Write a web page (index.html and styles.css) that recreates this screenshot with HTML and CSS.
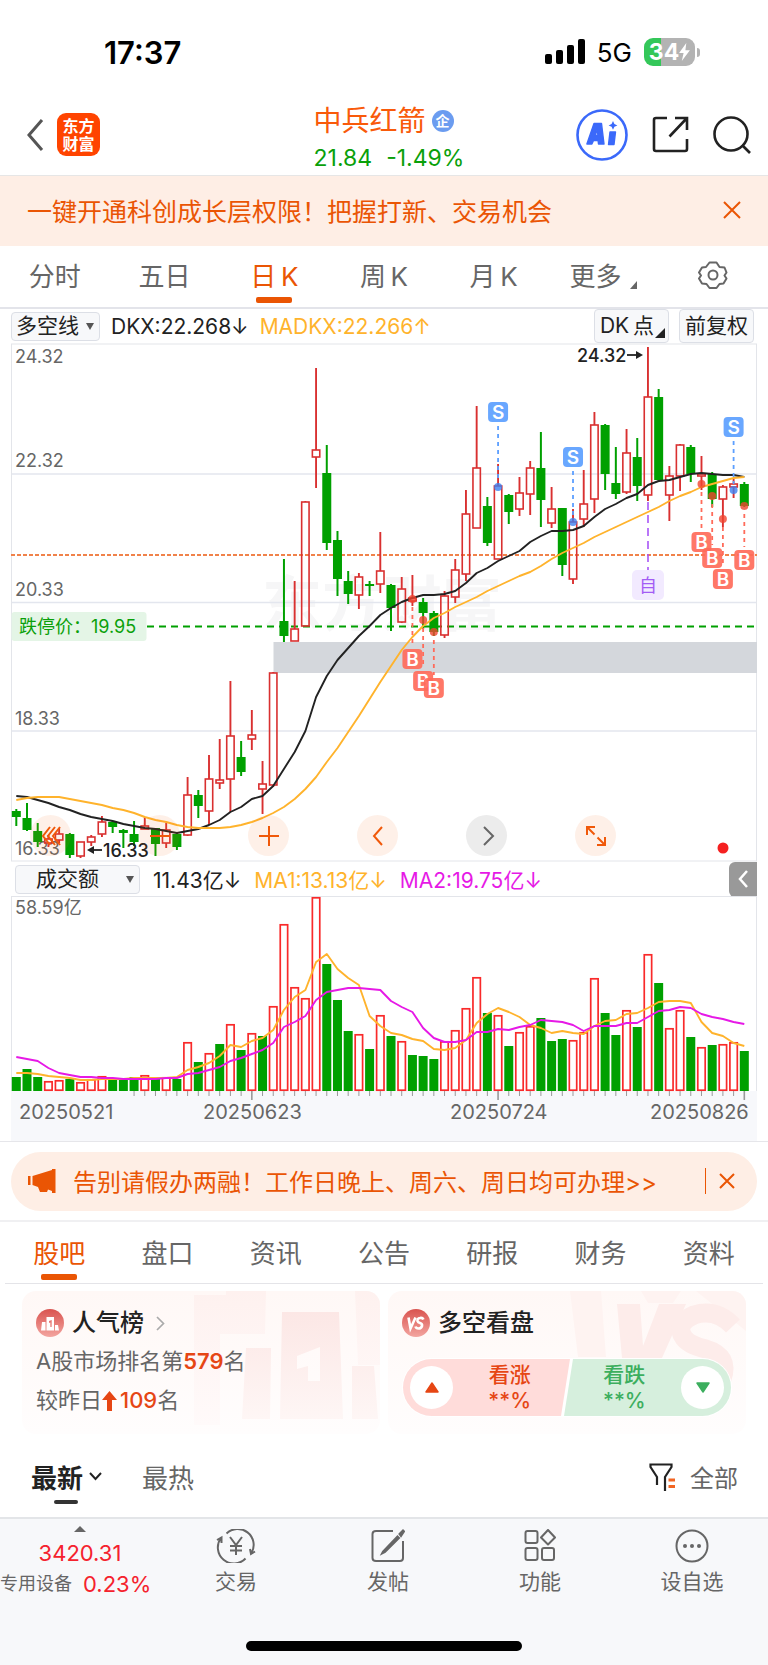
FILE: index.html
```html
<!DOCTYPE html>
<html lang="zh-CN">
<head>
<meta charset="utf-8">
<meta name="viewport" content="width=device-width, initial-scale=1">
<title>中兵红箭</title>
<link rel="stylesheet" href="styles.css">
</head>
<body>
<div class="status-bar">
  <time class="clock">17:37</time>
  <div class="status-right">
    <svg class="signal" viewBox="0 0 40 26" aria-hidden="true"><rect x="0" y="15" width="7" height="10" rx="2"/><rect x="11" y="11" width="7" height="14" rx="2"/><rect x="22" y="6" width="7" height="19" rx="2"/><rect x="33" y="0" width="7" height="25" rx="2"/></svg>
    <span class="network">5G</span>
    <span class="battery"><span class="battery-body">34<svg viewBox="0 0 12 20" aria-hidden="true"><path d="M8 0 0 11h5l-2 9 9-12H7z"/></svg></span><span class="battery-tip"></span></span>
  </div>
</div>

<header class="nav">
  <div class="nav-left">
    <button class="icon-button" aria-label="返回"><svg width="17" height="32" viewBox="0 0 17 32"><path d="M15 1 2 16l13 15" fill="none" stroke="#555" stroke-width="3"/></svg></button>
    <a class="logo" href="#"><span>东方</span><span>财富</span></a>
  </div>
  <div class="nav-title">
    <h1>中兵红箭<span class="badge">企</span></h1>
    <p><span>21.84</span><span>-1.49%</span></p>
  </div>
  <div class="nav-right">
    <button class="icon-button" aria-label="AI"><svg width="52" height="52" viewBox="0 0 52 52"><circle cx="26" cy="26" r="24.5" fill="#fff" stroke="#3b69fa" stroke-width="2.6"/><path fill="#3b69fa" stroke="#3b69fa" stroke-width="1.4" stroke-linejoin="round" fill-rule="evenodd" d="M18 14.500h7.500l2.500 20.500h-5.500l-.4-3.500h-4.600l-1.600 3.500h-5zM21.300 20l-2 6.500h2.600zM34 23h5.500l-1.500 12.500h-5.500z"/><path fill="#3b69fa" d="m37 12 1.400 3 3 1.400-3 1.400-1.400 3-1.400-3-3-1.400 3-1.400z"/></svg></button>
    <button class="icon-button" aria-label="分享"><svg width="37" height="37" viewBox="0 0 37 37" fill="none" stroke="#222" stroke-width="2.600"><path d="M15 2H4Q2 2 2 4v29q0 2 2 2h29q2 0 2-2V23M23 2h12v12M35 2 17.500 20.500"/></svg></button>
    <button class="icon-button" aria-label="搜索"><svg width="38" height="38" viewBox="0 0 38 38" fill="none" stroke="#222" stroke-width="2.600"><circle cx="18" cy="18" r="16.500"/><path d="m29 29 8 8"/></svg></button>
  </div>
</header>

<section class="banner">
  <a href="#">一键开通科创成长层权限！把握打新、交易机会</a>
  <button class="icon-button" aria-label="关闭"><svg width="18" height="18" viewBox="0 0 18 18"><path d="m1 1 16 16M17 1 1 17" stroke="#ea5504" stroke-width="2"/></svg></button>
</section>

<nav class="tabs period-tabs">
  <button class="tab">分时</button>
  <button class="tab">五日</button>
  <button class="tab active">日&thinsp;K</button>
  <button class="tab">周&thinsp;K</button>
  <button class="tab">月&thinsp;K</button>
  <button class="tab more">更多<span class="corner"></span></button>
  <button class="tab" aria-label="设置"><svg width="30" height="28" viewBox="0 0 30 28" fill="none" stroke="#666" stroke-width="2"><path d="M11.500 1.500h7l3 4.500 5 .5 2 5-2 3 2 3-3 5-4 .5-3 4h-7l-3-4-4.500-.5-3-5 2-3-2-3 3-5 4-.5z" stroke-linejoin="round"/><circle cx="15" cy="14" r="4.500"/></svg></button>
</nav>

<section class="info-row">
  <label class="picker"><select aria-label="主图指标"><option>多空线</option></select></label>
  <span class="ink">DKX:22.268↓</span>
  <span class="gold">MADKX:22.266↑</span>
  <div class="info-actions">
    <button class="chip dk">DK&thinsp;点<span class="corner"></span></button>
    <button class="chip">前复权</button>
  </div>
</section>

<section class="chart-box">
  <svg id="price-chart" class="chart" viewBox="0 343 768 519" role="img" aria-label="日K线"></svg>
  <div class="chart-tools">
    <button aria-label="最左"><svg viewBox="0 0 20 20"><path d="m9 1-7 9 7 9M14 1l-7 9 7 9M19 1l-7 9 7 9"/></svg></button>
    <button aria-label="缩小"><svg viewBox="0 0 20 20"><path d="M0 10h20"/></svg></button>
    <button aria-label="放大"><svg viewBox="0 0 20 20"><path d="M0 10h20M10 0v20"/></svg></button>
    <button aria-label="左移"><svg viewBox="0 0 20 20"><path d="m14 1-8 9 8 9"/></svg></button>
    <button class="muted" aria-label="右移"><svg viewBox="0 0 20 20"><path d="m7 1 9 9-9 9"/></svg></button>
    <button aria-label="全屏"><svg viewBox="0 0 20 20"><path d="M1 9V1h8M1 1l7.500 7.500M19 11v8h-8M19 19l-7.500-7.500"/></svg></button>
  </div>
</section>

<section class="info-row volume-row">
  <label class="picker wide"><select aria-label="副图指标"><option>成交额</option></select></label>
  <span class="ink">11.43亿↓</span>
  <span class="gold">MA1:13.13亿↓</span>
  <span class="magenta">MA2:19.75亿↓</span>
  <button class="collapse" aria-label="收起"><svg width="10" height="18" viewBox="0 0 10 18"><path d="M9 1 2 9l7 8" fill="none" stroke="#fff" stroke-width="2.500"/></svg></button>
</section>
<svg id="volume-chart" class="chart" viewBox="0 896 768 245" role="img" aria-label="成交额"></svg>

<section class="notice-wrap">
  <div class="notice">
    <svg width="28" height="24" viewBox="0 0 28 24" fill="#ea5504" aria-hidden="true"><path d="M0 7h2.500v9H0zM4.500 7 24 1V0h3.500v24H24v-2l-4-1.500-1 2.500h-7l-2-5-5.500-2z"/></svg>
    <a href="#">告别请假办两融！工作日晚上、周六、周日均可办理&gt;&gt;</a>
    <button class="icon-button" aria-label="关闭"><svg width="16" height="16" viewBox="0 0 16 16"><path d="m1 1 14 14M15 1 1 15" stroke="#ea5504" stroke-width="2"/></svg></button>
  </div>
</section>

<nav class="tabs section-tabs">
  <button class="tab active">股吧</button>
  <button class="tab">盘口</button>
  <button class="tab">资讯</button>
  <button class="tab">公告</button>
  <button class="tab">研报</button>
  <button class="tab">财务</button>
  <button class="tab">资料</button>
</nav>

<section class="cards">
  <article class="card">
    <svg class="card-art" width="190" height="142" viewBox="0 0 190 142" aria-hidden="true"><defs><linearGradient id="fade" x1="0" y1="0" x2="0" y2="1"><stop offset="0" stop-color="#fce7e5"/><stop offset="1" stop-color="#fef6f5"/></linearGradient><linearGradient id="haze" x1="0" y1="0" x2="0" y2="1"><stop offset="0" stop-color="#fef1ef"/><stop offset="1" stop-color="#fffafa"/></linearGradient></defs><path fill="url(#haze)" d="M4 4h32V0h40l-1 43H30v91H4zM165 0h25v74h-22z"/><path fill="url(#fade)" fill-rule="evenodd" d="M56 57h25l-1 71H52zM92 21h57l4 107H90zM130 56l-23 9v13l11-3v15h12zM162 75h22l4 53h-26z"/></svg>
    <h2><svg width="28" height="28" viewBox="0 0 28 28" aria-hidden="true"><defs><linearGradient id="coin" x1="0" y1="0" x2="0" y2="1"><stop offset="0" stop-color="#d9534f"/><stop offset="1" stop-color="#f3a5a0"/></linearGradient></defs><circle cx="14" cy="14" r="14" fill="url(#coin)"/><path fill="#fff" fill-rule="evenodd" d="M6 13h3.500v8.500H5zM10.500 8h7.500v13.500h-7.500zM13 12v2l1.300-.4V18h1.400v-7zM19 16h3l1 5.500h-4z"/></svg>人气榜<svg width="9" height="15" viewBox="0 0 9 15" class="more-arrow" aria-hidden="true"><path d="m1 1 6.500 6.500L1 14" fill="none" stroke="#aaa" stroke-width="1.700"/></svg></h2>
    <p class="rank">A股市场排名第<b>579</b>名</p>
    <p>较昨日<svg width="15" height="20" viewBox="0 0 15 20" aria-label="上升"><path d="M7.500 0 15 9h-5v11H5V9H0z" fill="#e64614"/></svg><em>109</em>名</p>
  </article>
  <article class="card">
    <svg class="card-art" width="190" height="142" viewBox="0 0 190 142" aria-hidden="true"><path fill="#fef3f1" d="M14 0h31l5 66H22zM85 0h40l-8 12H92zM140 0h50v40z"/><path fill="#fdecea" d="M61 13h23l3 42 16-42h27L106 67H66z"/><path d="M177 35Q160 17 138 24q-20 9-10 23 5 7 22 11 24 7 16 30" fill="none" stroke="#fdecea" stroke-width="19"/></svg>
    <h2><svg width="28" height="28" viewBox="0 0 28 28" aria-hidden="true"><circle cx="14" cy="14" r="14" fill="url(#coin)"/><path d="m6.500 8.500 2 11 5-11M21.500 10.500q-1-2-3.500-1.500-3 .5-2.500 3 .5 1.500 2.500 2 2.500.8 2 3-.8 2.500-3.500 2.500-2.500 0-3-2" fill="none" stroke="#fff" stroke-width="2.600"/></svg>多空看盘</h2>
    <div class="vote">
      <button class="vote-up"><span class="disc"><svg width="14" height="11" viewBox="0 0 14 11"><path d="M7 1 13 10H1z" fill="#e64614" stroke="#e64614" stroke-width="1.500" stroke-linejoin="round"/></svg></span><span class="vote-text">看涨<br>**%</span></button>
      <button class="vote-down"><span class="vote-text">看跌<br>**%</span><span class="disc"><svg width="14" height="11" viewBox="0 0 14 11"><path d="M7 10 1 1h12z" fill="#3cae5e" stroke="#3cae5e" stroke-width="1.500" stroke-linejoin="round"/></svg></span></button>
    </div>
  </article>
</section>

<section class="feed-bar">
  <button class="feed-tab active">最新<svg width="13" height="9" viewBox="0 0 13 9" aria-hidden="true"><path d="m1 1 5.500 6L12 1" fill="none" stroke="#222" stroke-width="2"/></svg></button>
  <button class="feed-tab">最热</button>
  <button class="filter"><svg width="26" height="28" viewBox="0 0 26 28" aria-hidden="true"><path d="M8 22V14L1.500 4V1.500h21V4L16 14v14" fill="none" stroke="#222" stroke-width="2.200"/><path d="M19.500 17H26M19.500 23.500H26" stroke="#f26522" stroke-width="3"/></svg>全部</button>
</section>

<footer class="dock">
  <div class="dock-items">
    <button class="quote"><span class="up-mark"></span><span class="quote-index">3420.31</span><span class="quote-row"><span>专用设备</span><strong>0.23%</strong></span></button>
    <button class="dock-item"><svg width="40" height="34" viewBox="0 0 40 34"><path d="M10.500 4.500A16 16 0 0 1 35.500 24M29.500 29.500A16 16 0 0 1 5 9M1 11l4.500-2.500V14M39 22.500 35 25l-1-5M14 8l6 8 6-8M20 16v10M14 17h12M14 21.500h12"/></svg>交易</button>
    <button class="dock-item"><svg width="34" height="34" viewBox="0 0 34 34"><path d="M22 2H5Q1.500 2 1.500 5v24q0 3 3.500 3h24q3 0 3-3V12"/><path d="M28.500 5 32 1.500l1 1L30 7zM26.500 7.500 12 22.500l-1 2 3-1.500L28 9z" fill="#666"/></svg>发帖</button>
    <button class="dock-item"><svg width="32" height="34" viewBox="0 0 32 34"><rect x="1.500" y="2" width="12" height="12" rx="2"/><rect x="1.500" y="19" width="12" height="12" rx="2"/><rect x="18" y="19" width="12" height="12" rx="2"/><path d="m24 1 7 7.500-7 7-7-7z" stroke-linejoin="round"/></svg>功能</button>
    <button class="dock-item"><svg width="34" height="34" viewBox="0 0 34 34"><circle cx="17" cy="17" r="15.500"/><g fill="#666" stroke="none"><circle cx="10" cy="17" r="2"/><circle cx="17" cy="17" r="2"/><circle cx="24" cy="17" r="2"/></g></svg>设自选</button>
  </div>
  <div class="home-indicator"></div>
</footer>
<script src="chart.js"></script>
</body>
</html>
```
FILE: styles.css
```css
* { box-sizing: border-box; }

body {
  margin: 0;
  background: #fff;
  color: #222;
  font-family: Inter, "Noto Sans CJK SC", sans-serif;
}

button {
  margin: 0;
  padding: 0;
  border: 0;
  background: none;
  color: inherit;
  font: inherit;
}

a { color: inherit; text-decoration: none; }
h1, h2, p { margin: 0; }
svg { display: block; flex: none; }
.icon-button { display: flex; }

/* Status bar */
.status-bar {
  display: flex;
  justify-content: space-between;
  align-items: center;
  height: 88px;
  padding: 16px 68px 0 104px;
  color: #000;
}
.clock { font-size: 31px; font-weight: 600; }
.status-right { display: flex; align-items: center; }
.signal { width: 40px; height: 26px; }
.network { margin: 0 12px; font-size: 26px; }
.battery { display: flex; align-items: center; gap: 2px; }
.battery-body {
  display: flex;
  align-items: center;
  justify-content: center;
  width: 51px;
  height: 28px;
  border-radius: 9px;
  background: linear-gradient(90deg, #34c759 34%, #b3b3b3 34%);
  color: #fff;
  font-size: 23px;
  font-weight: 700;
}
.battery-body svg { width: 11px; height: 18px; fill: #fff; }
.battery-tip { width: 3px; height: 9px; border-radius: 0 4px 4px 0; background: #b3b3b3; }

/* Navigation */
.nav {
  display: grid;
  grid-template-columns: 1fr auto 1fr;
  align-items: center;
  height: 88px;
  padding: 0 17px 0 27px;
  border-bottom: 1px solid #e6e6e6;
}
.nav-left { display: flex; align-items: center; gap: 13px; padding-top: 6px; }
.logo {
  display: flex;
  flex-direction: column;
  align-items: center;
  justify-content: center;
  width: 43px;
  height: 43px;
  border-radius: 9px;
  background: #ff4400;
  color: #fff;
  font-size: 16px;
  font-weight: 700;
  line-height: 18px;
}
.nav-title { padding-top: 12px; text-align: center; }
.nav-title h1 {
  display: flex;
  align-items: center;
  gap: 6px;
  color: #f95a0a;
  font-size: 28px;
  font-weight: 400;
  line-height: 40px;
}
.badge {
  width: 22px;
  height: 22px;
  border-radius: 50%;
  background: #6b9cf0;
  color: #fff;
  font-size: 14px;
  font-weight: 700;
  line-height: 22px;
}
.nav-title p {
  display: flex;
  justify-content: center;
  gap: 14px;
  color: #0aa00a;
  font-size: 23px;
  line-height: 34px;
}
.nav-right { display: flex; align-items: center; justify-content: flex-end; gap: 24px; padding-top: 6px; }

/* Top banner */
.banner {
  display: flex;
  align-items: center;
  justify-content: space-between;
  height: 70px;
  padding: 0 27px 2px;
  background: #feeee5;
  color: #ea5504;
  font-size: 25px;
}

/* Tabs */
.tabs { display: grid; grid-template-columns: repeat(7, 1fr); }
.tab {
  position: relative;
  display: flex;
  align-items: center;
  justify-content: center;
  height: 61px;
  padding-bottom: 4px;
  color: #666;
  font-size: 26px;
}
.tab.active { color: #ea5504; }
.tab.active::after {
  content: "";
  position: absolute;
  bottom: 4px;
  left: 50%;
  width: 36px;
  height: 6px;
  margin-left: -18px;
  border-radius: 2px;
  background: #ea5504;
}
.period-tabs { border-bottom: 2px solid #e3e4ea; }
.corner {
  align-self: flex-end;
  border-left: 7px solid transparent;
  border-bottom: 8px solid currentColor;
}
.more .corner { margin: 0 0 14px 9px; }

/* Indicator rows */
.info-row {
  display: flex;
  align-items: center;
  gap: 11px;
  height: 34px;
  padding: 0 14px 0 11px;
  font-size: 21px;
  white-space: nowrap;
}
.picker { position: relative; display: flex; }
.picker::after {
  content: "";
  position: absolute;
  top: 11px;
  right: 6px;
  border: 4px solid transparent;
  border-top: 7px solid #555;
  border-bottom: 0;
}
.picker select {
  appearance: none;
  width: 89px;
  height: 29px;
  padding: 0 0 2px 4px;
  border: 1px solid #dcdfe6;
  border-radius: 4px;
  background: #f7f8fa;
  color: #222;
  font: inherit;
  line-height: 26px;
}
.picker.wide select { width: 125px; padding-left: 20px; }
.gold { color: #ffb32c; }
.magenta { color: #e619e6; }
.info-actions { display: flex; gap: 10px; margin-left: auto; }
.chip {
  display: flex;
  align-items: center;
  height: 34px;
  padding: 0 5px 4px;
  border: 1px solid #dcdfe6;
  border-radius: 4px;
  background: #f7f8fa;
}
.dk { padding-right: 3px; }
.dk .corner { margin-left: 1px; border-left-width: 10px; border-bottom-width: 10px; }
.volume-row { gap: 13px; padding: 0 11px 0 15px; }
.collapse {
  display: flex;
  align-items: center;
  justify-content: center;
  width: 28px;
  height: 35px;
  margin-left: auto;
  border-radius: 6px 0 0 6px;
  background: #999;
}

/* Charts */
.chart { width: 100%; height: auto; }
.chart text { font-family: Inter, "Noto Sans CJK SC", sans-serif; }
.chart-box { position: relative; }
.chart-tools {
  position: absolute;
  bottom: 6px;
  left: 30px;
  display: flex;
  gap: 68px;
}
.chart-tools button {
  display: flex;
  align-items: center;
  justify-content: center;
  width: 41px;
  height: 41px;
  border-radius: 50%;
  background: rgba(245, 110, 30, .1);
}
.chart-tools .muted { background: #ececec; }
.chart-tools svg { width: 20px; height: 20px; fill: none; stroke: #f0590a; stroke-width: 2; }
.chart-tools .muted svg { stroke: #666; }

/* Notice pill */
.notice-wrap { padding: 10px 11px 9px; border-top: 1px solid #e6e6ea; border-bottom: 2px solid #f0f0f2; }
.notice {
  display: flex;
  align-items: center;
  height: 59px;
  padding: 0 22px 2px 17px;
  border-radius: 30px;
  background: #feeee5;
  color: #ea5504;
  font-size: 24px;
}
.notice a { margin: 0 auto 0 17px; }
.notice .icon-button { padding: 5px 0 5px 13px; border-left: 1px solid #ea5504; }

.section-tabs { margin: 0 5px; border-bottom: 1px solid #e4e4e8; }
.section-tabs .tab { padding-bottom: 2px; }
.section-tabs .tab.active::after { bottom: 3px; }

/* Cards */
.cards { display: grid; grid-template-columns: 1fr 1fr; gap: 8px; padding: 7px 22px 0; }
.card {
  position: relative;
  height: 143px;
  padding: 16px 14px;
  overflow: hidden;
  border-radius: 14px;
  background: linear-gradient(#fff8f6, #fffdfd);
}
.card-art { position: absolute; top: 0; right: 0; }
.card > h2, .card > p, .vote { position: relative; }
.card h2 {
  display: flex;
  align-items: center;
  gap: 8px;
  font-size: 24px;
  font-weight: 500;
  line-height: 32px;
}
.more-arrow { margin-left: 4px; }
.card p {
  display: flex;
  align-items: center;
  color: #666;
  font-size: 22px;
  line-height: 39px;
}
.card .rank { margin-top: 3px; }
.card p svg { margin-right: 3px; }
.card b, .card em { color: #e64614; font-style: normal; }
.card b { font-weight: 600; }
.card em { font-weight: 500; }

.vote {
  display: flex;
  height: 59px;
  margin-top: 19px;
  border: 1px solid #fff;
  border-radius: 30px;
  overflow: hidden;
  background: #fff;
}
.vote button {
  display: flex;
  align-items: center;
  justify-content: space-between;
  flex: 1;
  padding: 0 7px;
  font-size: 21px;
  line-height: 26px;
}
.vote-up {
  margin-right: -4px;
  background: #ffdcda;
  color: #e64614;
  clip-path: polygon(0 0, 100% 0, calc(100% - 9px) 100%, 0 100%);
}
.vote-down {
  margin-left: -2px;
  background: #d6efdd;
  color: #3cae5e;
  clip-path: polygon(9px 0, 100% 0, 100% 100%, 0 100%);
}
.vote-text { margin: 0 32px; font-weight: 500; }
.disc {
  display: flex;
  align-items: center;
  justify-content: center;
  width: 43px;
  height: 43px;
  border-radius: 50%;
  background: #fff;
}

/* Feed filters */
.feed-bar {
  display: flex;
  align-items: center;
  gap: 40px;
  height: 83px;
  padding: 2px 30px 0 31px;
  color: #666;
  font-size: 26px;
}
.feed-tab { position: relative; display: flex; align-items: center; gap: 6px; }
.feed-tab.active { color: #222; font-weight: 700; }
.feed-tab.active::after {
  content: "";
  position: absolute;
  bottom: -9px;
  left: 23px;
  width: 24px;
  height: 4px;
  border-radius: 2px;
  background: #333;
}
.filter { display: flex; align-items: center; gap: 15px; margin-left: auto; font-size: 24px; }

/* Bottom dock */
.dock {
  padding-bottom: 14px;
  border-top: 2px solid #e3e5e8;
  background: #f7f8fa;
  color: #666;
}
.dock-items { display: grid; grid-template-columns: 160px repeat(4, 1fr); height: 122px; }
.quote { display: flex; flex-direction: column; align-items: center; color: #f5222d; }
.up-mark {
  margin: 7px 0 5px;
  border: 6px solid transparent;
  border-top: 0;
  border-bottom: 6px solid #666;
}
.quote-index { font-size: 22px; line-height: 32px; }
.quote-row { display: flex; align-items: center; align-self: flex-start; gap: 11px; line-height: 30px; }
.quote-row span { color: #666; font-size: 18px; }
.quote-row strong { font-size: 22px; font-weight: 400; }
.dock-item {
  display: flex;
  flex-direction: column;
  align-items: center;
  gap: 4px;
  padding-top: 10px;
  font-size: 21px;
  line-height: 30px;
}
.dock-item svg { fill: none; stroke: #666; stroke-width: 2; }
.home-indicator {
  width: 36%;
  height: 10px;
  margin: 0 auto;
  border-radius: 5px;
  background: #000;
}
```
FILE: chart.js
```js
const LEFT = 16.3;
const STEP = 10.706;
const BODY = 9;
const RED = '#d93030';
const GREEN = '#00a000';
const xAt = (i) => LEFT + i * STEP;

// Colour, high, body top, body bottom, low
const candles = [
  ['g', 809, 811, 817, 826], ['g', 803, 818, 830, 831], ['g', 823, 831, 842, 847], ['r', 835, 839, 843, 847],
  ['r', 828, 834, 840, 843], ['g', 833, 834, 855, 858], ['r', 842, 842, 856, 858], ['r', 835, 837, 842, 846],
  ['r', 816, 822, 834, 837], ['g', 821, 822, 827, 833], ['g', 829, 830, 833, 848], ['g', 821, 834, 842, 846],
  ['r', 817, 826, 829, 829], ['g', 828, 828, 844, 856], ['r', 823, 830, 843, 848], ['g', 833, 834, 847, 850],
  ['r', 777, 795, 835, 836], ['g', 790, 795, 806, 818], ['r', 755, 779, 811, 825], ['r', 739, 780, 783, 789],
  ['r', 681, 736, 779, 812], ['g', 741, 757, 772, 776], ['r', 710, 735, 739, 750], ['r', 761, 784, 789, 814],
  ['r', 672, 673, 785, 787], ['g', 559, 621, 636, 642], ['r', 581, 629, 641, 641], ['r', 501, 502, 626, 626],
  ['r', 368, 450, 457, 488], ['g', 445, 473, 543, 550], ['g', 531, 540, 579, 596], ['g', 571, 581, 594, 604],
  ['r', 573, 577, 595, 609], ['g', 581, 584, 586, 596], ['r', 532, 571, 584, 593], ['g', 584, 585, 608, 631],
  ['r', 577, 589, 622, 623], ['r', 575, 598, 601, 606], ['g', 598, 602, 613, 629], ['g', 611, 613, 632, 636],
  ['r', 591, 596, 635, 638], ['r', 559, 570, 597, 603], ['r', 490, 514, 574, 581], ['r', 406, 468, 528, 528],
  ['g', 497, 506, 543, 546], ['r', 464, 486, 559, 559], ['g', 494, 495, 512, 524], ['r', 477, 493, 509, 516],
  ['r', 461, 468, 494, 515], ['g', 432, 468, 500, 527], ['r', 487, 509, 523, 528], ['g', 508, 508, 565, 576],
  ['r', 509, 522, 579, 584], ['r', 470, 504, 519, 527], ['r', 412, 425, 499, 513], ['g', 424, 425, 474, 490],
  ['g', 447, 483, 494, 499], ['r', 429, 453, 492, 494], ['g', 438, 457, 486, 501], ['r', 347, 397, 495, 501],
  ['g', 389, 397, 480, 482], ['r', 466, 476, 495, 521], ['r', 444, 445, 476, 491], ['g', 445, 447, 474, 482],
  ['r', 456, 474, 476, 490], ['g', 472, 474, 499, 507], ['r', 485, 487, 499, 527], ['r', 479, 484, 487, 498],
  ['g', 482, 484, 506, 507]
];

const dkx = [796, 797, 800, 803, 807, 810, 814, 817, 819, 821, 824, 826, 828, 829, 831, 833, 831, 829, 825, 820, 812, 807, 799, 796, 786, 769, 752, 731, 697, 676, 660, 648, 636, 626, 615, 608, 602, 598, 595, 595, 594, 591, 583, 573, 568, 561, 556, 551, 542, 536, 531, 531, 530, 526, 517, 509, 504, 498, 494, 485, 481, 480, 477, 474, 473, 474, 475, 475, 477];
const madkx = [800, 798, 797, 797, 797, 799, 801, 803, 805, 808, 810, 813, 817, 820, 822, 825, 827, 828, 828, 828, 827, 825, 822, 818, 813, 807, 799, 789, 777, 762, 748, 732, 716, 699, 682, 666, 650, 637, 626, 618, 613, 607, 602, 597, 591, 586, 581, 576, 572, 566, 559, 553, 548, 543, 537, 532, 527, 522, 517, 512, 507, 501, 496, 492, 487, 484, 481, 478, 477];

const volumeColors = 'gggrrgrrrgggrgrgrgrgrgrgrrrrrgggrgrgrggg' + 'rrrrgrgrrgggrrrggrgrgrrgrgrrg';
const volumes = [1077, 1069, 1077, 1081, 1080, 1079, 1082, 1079, 1076, 1079, 1079, 1077, 1075, 1079, 1077, 1079, 1042, 1062, 1053, 1044, 1024, 1050, 1033, 1036, 1006, 924, 987, 998, 897, 964, 1000, 1031, 1034, 1049, 1015, 1036, 1041, 1055, 1056, 1059, 1041, 1030, 1008, 977, 1013, 1015, 1046, 1032, 1026, 1018, 1041, 1039, 1040, 1032, 978, 1013, 1035, 1010, 1027, 954, 983, 1028, 1010, 1037, 1047, 1045, 1044, 1042, 1051];
const ma1 = [1073, 1073, 1074, 1076, 1077, 1078, 1080, 1080, 1079, 1079, 1079, 1078, 1078, 1078, 1078, 1077, 1070, 1067, 1063, 1056, 1045, 1047, 1041, 1038, 1030, 1010, 997, 990, 962, 954, 969, 978, 985, 1016, 1026, 1033, 1035, 1039, 1041, 1049, 1050, 1048, 1040, 1023, 1014, 1008, 1012, 1017, 1025, 1028, 1033, 1031, 1033, 1034, 1026, 1021, 1020, 1014, 1013, 1008, 1002, 1001, 1001, 1003, 1022, 1033, 1036, 1043, 1046];
const ma2 = [1057, 1059, 1061, 1068, 1073, 1075, 1077, 1077, 1078, 1078, 1079, 1079, 1079, 1079, 1078, 1078, 1074, 1073, 1070, 1067, 1061, 1058, 1054, 1050, 1043, 1027, 1022, 1016, 1000, 992, 990, 988, 988, 989, 990, 1001, 1007, 1012, 1028, 1038, 1042, 1042, 1040, 1032, 1032, 1029, 1030, 1027, 1025, 1020, 1021, 1022, 1025, 1031, 1026, 1026, 1026, 1023, 1023, 1017, 1011, 1010, 1007, 1008, 1014, 1017, 1019, 1022, 1024];

const line = (x1, y1, x2, y2, color, width = 1, dash = '') =>
  `<line x1="${x1}" y1="${y1}" x2="${x2}" y2="${y2}" stroke="${color}" stroke-width="${width}" stroke-dasharray="${dash}"/>`;
const rect = (x, y, w, h, fill, extra = '') =>
  `<rect x="${x}" y="${y}" width="${w}" height="${h}" fill="${fill}" ${extra}/>`;
const text = (x, y, size, fill, value, extra = '') =>
  `<text x="${x}" y="${y}" font-size="${size}" fill="${fill}" ${extra}>${value}</text>`;
const curve = (values, color) =>
  `<polyline points="${values.map((y, i) => xAt(i).toFixed(1) + ',' + y).join(' ')}" fill="none" stroke="${color}" stroke-width="1.9" stroke-linejoin="round"/>`;

function candle([color, high, top, bottom, low], i) {
  const x = xAt(i);
  const half = BODY / 2;
  if (color === 'g') {
    return line(x, high, x, low, GREEN, 2) + rect(x - half, top, BODY, bottom - top, GREEN);
  }
  return line(x, high, x, top, RED, 1.9) + line(x, bottom, x, low, RED, 1.9) +
    rect(x - half + 0.8, top, BODY - 1.6, bottom - top, 'none', `stroke="${RED}" stroke-width="1.6"`);
}

function marker(i, dotY, boxY, letter) {
  const x = xAt(i);
  const sell = letter === 'S';
  const color = sell ? '#5c9fff' : '#ff6b5a';
  const [from, to] = sell ? [boxY + 14, dotY - 6] : [dotY + 8, boxY - 13];
  return line(x, from, x, to, color, 1.8, '4 4') +
    `<circle cx="${x}" cy="${dotY}" r="4" fill="${sell ? '#3d7ff0' : '#f0452f'}" opacity=".8"/>` +
    rect(x - 10, boxY - 10, 20, 20, color, 'rx="4" opacity=".92"') +
    text(x, boxY + 7, 19, '#fff', letter, 'text-anchor="middle" font-weight="600"');
}

const price = [];
price.push(text(262, 626, 60, '#f6f6f7', '东方财富', 'font-weight="700"'));
[474, 602.5, 731].forEach((y) => price.push(line(11, y, 757, y, '#e3e6ee', 1.4)));
price.push(rect(11.5, 344, 745, 517, 'none', 'stroke="#e3e5ea"'));
price.push(rect(273.5, 642, 483.5, 31, '#d4d7dc'));
price.push(line(147, 626.5, 754, 626.5, GREEN, 1.8, '7 5'));
price.push(line(11, 555, 757, 555, '#f0824a', 1.8, '4 2'));
[['24.32', 363], ['22.32', 467], ['20.33', 596], ['18.33', 725], ['16.33', 855]].forEach(([value, y]) => price.push(text(15, y, 18, '#666', value)));
candles.forEach((item, i) => price.push(candle(item, i)));
price.push(curve(dkx, '#222'), curve(madkx, '#ffb32c'));
price.push(rect(11.5, 612, 135, 29, '#e4f5e6', 'rx="3"'), text(19, 633, 18, '#0aa00a', '跌停价：19.95'));
price.push(text(577, 362, 18, '#222', '24.32', 'font-weight="500"'), line(627, 355, 638, 355, '#222', 1.8), '<path d="m636 351 7 4-7 4z" fill="#222"/>');
price.push(text(103, 857, 18, '#222', '16.33', 'font-weight="500"'), line(90, 850, 102, 850, '#222', 1.8), '<path d="m94 846-7 4 7 4z" fill="#222"/>');
price.push(line(648, 502, 648, 570, '#a855f7', 1.6, '8 5'), rect(632, 570, 32, 30, '#f2eaff', 'rx="5"'), text(648, 592, 18, '#a35cf5', '自', 'text-anchor="middle"'));
[[45, 487, 412], [52, 522, 457], [67, 490, 427]].forEach((m) => price.push(marker(...m, 'S')));
[[37, 599, 659], [38, 620, 681], [39, 632, 688], [64, 484, 542], [65, 496, 558], [66, 519, 579], [68, 506, 560]].forEach((m) => price.push(marker(...m, 'B')));
price.push('<circle cx="723" cy="848" r="5.500" fill="#f52020"/>');
document.getElementById('price-chart').innerHTML = price.join('');

const volume = [];
volume.push(rect(11, 1091, 746, 50, '#f7f8fb'));
volume.push(line(11, 896.5, 757, 896.5, '#e3e5ea'), line(11.5, 896, 11.5, 1091, '#e3e5ea'), line(756.5, 896, 756.5, 1091, '#e3e5ea'));
volume.push(text(15, 914, 18, '#666', '58.59亿'));
volumes.forEach((top, i) => {
  const x = xAt(i);
  volume.push(volumeColors[i] === 'g'
    ? rect(x - 4.5, top, 9, 1091 - top, GREEN)
    : rect(x - 3.7, top + 0.8, 7.4, 1089.4 - top, '#fff', 'stroke="#f92a2a" stroke-width="1.7"'));
  if (i > 10) {
    const major = i === 22 || i === 45 || i === 68;
    volume.push(line(x, 1091, x, major ? 1100 : 1096, '#999', major ? 1.6 : 1));
  }
});
volume.push(curve(ma1, '#ffb32c'), curve(ma2, '#e619e6'));
[['20250521', 19], ['20250623', 203], ['20250724', 450], ['20250826', 650]].forEach(([value, x]) => volume.push(text(x, 1119, 20, '#666', value)));
document.getElementById('volume-chart').innerHTML = volume.join('');
```
